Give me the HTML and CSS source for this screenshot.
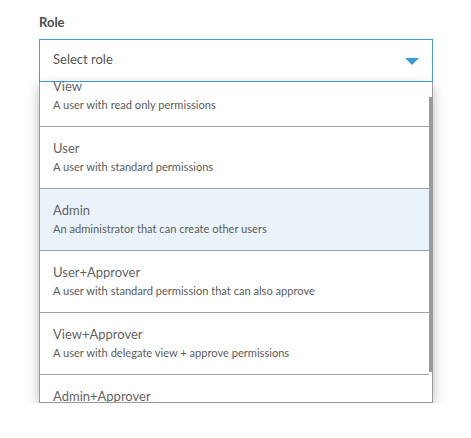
FILE: index.html
```html
<!DOCTYPE html>
<html lang="en">
<head>
  <meta charset="UTF-8">
  <meta name="viewport" content="width=device-width, initial-scale=1.0">
  <title>Role</title>
  <link rel="stylesheet" href="styles.css">
</head>
<body>

  <div class="field">
    <label class="field-label" for="role">Role</label>

    <div class="select" id="role">
      <span class="select-value">Select role</span>
      <svg class="select-arrow" width="14" height="7" viewBox="0 0 14 7">
        <polygon points="0,0 14,0 7,7" />
      </svg>
    </div>

    <!-- dropdown list, scrolled a little -->
    <div class="menu">
      <div class="menu-view">
        <ul class="menu-list">
          <li class="option">
            <div class="option-title">View</div>
            <div class="option-desc">A user with read only permissions</div>
          </li>
          <li class="option">
            <div class="option-title">User</div>
            <div class="option-desc">A user with standard permissions</div>
          </li>
          <li class="option active">
            <div class="option-title">Admin</div>
            <div class="option-desc">An administrator that can create other users</div>
          </li>
          <li class="option">
            <div class="option-title">User+Approver</div>
            <div class="option-desc">A user with standard permission that can also approve</div>
          </li>
          <li class="option">
            <div class="option-title">View+Approver</div>
            <div class="option-desc">A user with delegate view + approve permissions</div>
          </li>
          <li class="option">
            <div class="option-title">Admin+Approver</div>
            <div class="option-desc">An administrator that can also approve</div>
          </li>
        </ul>
      </div>
      <div class="menu-track">
        <div class="menu-thumb"></div>
      </div>
    </div>
  </div>

</body>
</html>
```

FILE: styles.css
```css
body {
  margin: 0;
  background: #fff;
  font-family: Lato, 'Open Sans', sans-serif;
  color: #5f5f5f;
}

.field {
  width: 394px;
  padding: 14px 0 0 39px;
}

.field-label {
  display: block;
  font-size: 13px;
  font-weight: 700;
  line-height: 16px;
  color: #4c4c4c;
  margin-bottom: 9px;
}

.select {
  box-sizing: border-box;
  height: 43px;
  border: 1px solid #3f9fdd;
  background: #fff;
  display: flex;
  align-items: center;
  justify-content: space-between;
  padding: 0 13px 3px 13px;
  font-size: 13px;
  color: #555;
}

.select-arrow {
  fill: #3a9ad9;
  margin-top: 4px;
}

.menu {
  display: flex;
  box-sizing: border-box;
  width: 394px;
  height: 321px;
  background: #fff;
  border: 1px solid #9a9a9a;
  border-top: none;
  box-shadow: 0 5px 12px rgba(0, 0, 0, 0.28);
}

.menu-view {
  flex: 1;
  overflow: hidden;
}

.menu-list {
  margin: -17px 0 0 0;
  padding: 0;
  list-style: none;
}

.menu-track {
  width: 3px;
  flex-shrink: 0;
}

.menu-thumb {
  margin-top: 15px;
  height: 275px;
  background: #9b9b9b;
}

.option {
  height: 49px;
  padding: 12px 13px 0 13px;
  border-bottom: 1px solid #a2a2a2;
}

.option.active {
  background: #ebf3fa;
}

.option-title {
  font-size: 13px;
  line-height: 18px;
  color: #646464;
}

.option-desc {
  margin-top: 2px;
  font-size: 11.1px;
  line-height: 16px;
  color: #5c5c5c;
}
```
